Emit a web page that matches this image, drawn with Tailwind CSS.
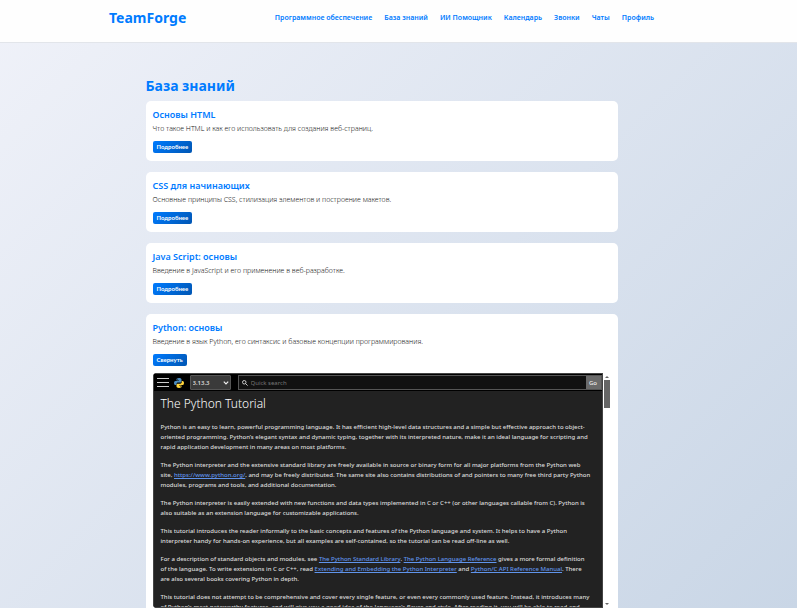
<!DOCTYPE html>
<html lang="ru">
<head>
<meta charset="utf-8">
<meta name="viewport" content="width=device-width, initial-scale=1">
<title>TeamForge — База знаний</title>
<script src="https://cdn.jsdelivr.net/npm/@tailwindcss/browser@4"></script>
</head>
<body class="h-screen overflow-hidden bg-linear-135 from-[#f0f2f9] to-[#c9d6e6] font-['Noto_Sans','Open_Sans',sans-serif] text-[#222]">
<header class="border-b border-[#e2e5ea] bg-[#fefefe] pr-[34px]">
  <div class="mx-auto flex h-[42px] max-w-[545px] items-center justify-between pb-1.5">
    <a href="#" class="text-[14px] leading-5 font-bold text-[#007bff]">TeamForge</a>
    <nav class="flex gap-3 text-[7px] leading-3 font-semibold whitespace-nowrap text-[#007bff]">
      <a href="#">Программное обеспечение</a>
      <a href="#">База знаний</a>
      <a href="#">ИИ Помощник</a>
      <a href="#">Календарь</a>
      <a href="#">Звонки</a>
      <a href="#">Чаты</a>
      <a href="#">Профиль</a>
    </nav>
  </div>
</header>
<main class="pt-[33px] pr-[34px]">
  <div class="mx-auto max-w-[472px]">
    <h1 class="mb-[5px] text-[14px] leading-5 font-bold text-[#007bff]">База знаний</h1>
    <div class="flex flex-col gap-[11px]">
      <article class="rounded-[5px] bg-white px-[7px] py-2">
        <h2 class="text-[9px] leading-3 font-semibold text-[#007bff]">Основы HTML</h2>
        <p class="mt-0.5 text-[7px] leading-3 font-light">Что такое HTML и как его использовать для создания веб-страниц.</p>
        <button class="mt-1.5 block h-3 rounded-xs bg-linear-135 from-[#007bff] to-[#0056b3] px-1 font-['Lato',sans-serif] text-[6px] leading-3 font-bold text-white">Подробнее</button>
      </article>
      <article class="rounded-[5px] bg-white px-[7px] py-2">
        <h2 class="text-[9px] leading-3 font-semibold text-[#007bff]">CSS для начинающих</h2>
        <p class="mt-0.5 text-[7px] leading-3 font-light">Основные принципы CSS, стилизация элементов и построение макетов.</p>
        <button class="mt-1.5 block h-3 rounded-xs bg-linear-135 from-[#007bff] to-[#0056b3] px-1 font-['Lato',sans-serif] text-[6px] leading-3 font-bold text-white">Подробнее</button>
      </article>
      <article class="rounded-[5px] bg-white px-[7px] py-2">
        <h2 class="text-[9px] leading-3 font-semibold text-[#007bff]">Java Script: основы</h2>
        <p class="mt-0.5 text-[7px] leading-3 font-light">Введение в JavaScript и его применение в веб-разработке.</p>
        <button class="mt-1.5 block h-3 rounded-xs bg-linear-135 from-[#007bff] to-[#0056b3] px-1 font-['Lato',sans-serif] text-[6px] leading-3 font-bold text-white">Подробнее</button>
      </article>
      <article class="rounded-[5px] bg-white px-[7px] py-2">
        <h2 class="text-[9px] leading-3 font-semibold text-[#007bff]">Python: основы</h2>
        <p class="mt-0.5 text-[7px] leading-3 font-light">Введение в язык Python, его синтаксис и базовые концепции программирования.</p>
        <button class="mt-1.5 block h-3 rounded-xs bg-linear-135 from-[#007bff] to-[#0056b3] px-1 font-['Lato',sans-serif] text-[6px] leading-3 font-bold text-white">Свернуть</button>
        <div class="mt-[7px] flex h-[235px] overflow-hidden rounded-[4px]">
          <section class="min-w-0 grow overflow-hidden border border-[#444] bg-[#222] text-[#ddd]">
            <div class="flex h-[17px] items-center bg-black pl-[3px]">
              <button aria-label="Меню" class="block text-[#ccc]"><svg class="h-[9px] w-3" viewBox="0 0 12 9" stroke="currentColor" stroke-width="1"><path d="M0 .5h12M0 4.5h12M0 8.5h12"/></svg></button>
              <svg class="ml-[5px] size-[10px]" viewBox="0 0 24 24" role="img" aria-label="Python">
                <path fill="#4b8bbe" fill-rule="evenodd" d="M11.9 0C6.600 0 6 2 6 3.500V6h6v1H3.500C1.500 7 0 9 0 12s1.500 5 3.500 5H6v-3c0-2 1.500-3.500 3.500-3.500h5.500c1.700 0 3-1.300 3-3v-4C18 1.500 16 0 11.900 0ZM8.700 2a1.100 1.100 0 1 1 0 2.200 1.100 1.100 0 0 1 0-2.200Z"/>
                <path fill="#ffd43b" fill-rule="evenodd" d="M12.100 24c5.300 0 5.900-2 5.900-3.500V18h-6v-1h8.500c2 0 3.500-2 3.500-5s-1.500-5-3.500-5H18.500v3c0 2-1.500 3.500-3.500 3.500H9.500c-1.700 0-3.500 1.300-3.500 3v4C6 22.500 8 24 12.100 24Zm3.200-2a1.100 1.100 0 1 1 0-2.200 1.100 1.100 0 0 1 0 2.200Z"/>
              </svg>
              <div class="relative ml-[6px] w-[41px] shrink-0">
                <select aria-label="Версия" class="block h-[15px] w-full appearance-none rounded-[1px] border border-[#555] bg-[#3a3a3a] pl-0.5 text-[6px] leading-3 font-semibold text-[#ddd]"><option>3.13.3</option></select>
                <svg class="pointer-events-none absolute top-[6px] right-0.5 h-1 w-1.5" viewBox="0 0 6 4" fill="none" stroke="#eee" stroke-width="1.200"><path d="m.8.7 2.200 2.300L5.200.7"/></svg>
              </div>
              <form class="ml-[7px] flex h-[15px] min-w-0 grow border border-[#555] bg-[#111]">
                <label for="search" class="flex items-center pl-[3px]"><svg class="size-1.5" viewBox="0 0 12 12" fill="none" stroke="#ddd" stroke-width="1.800" role="img" aria-label="Поиск"><circle cx="4.500" cy="4.500" r="3.500"/><path d="m7 7 4.200 4.200"/></svg></label>
                <input id="search" type="text" placeholder="Quick search" class="min-w-0 grow pl-[3px] text-[6px] leading-3 placeholder:text-[#777]">
                <button type="button" class="w-[15px] bg-[#6a6a6a] text-[6px] leading-3 font-medium text-[#eee]">Go</button>
              </form>
            </div>
            <div class="px-[7px] pt-[5px] text-[6px] leading-[10px] font-medium whitespace-nowrap">
              <h3 class="mb-[10px] text-[12px] leading-4 font-light text-white">The Python Tutorial</h3>
              <div class="flex flex-col gap-2">
                <p>Python is an easy to learn, powerful programming language. It has efficient high-level data structures and a simple but effective approach to object-<br>oriented programming. Python’s elegant syntax and dynamic typing, together with its interpreted nature, make it an ideal language for scripting and<br>rapid application development in many areas on most platforms.</p>
                <p>The Python interpreter and the extensive standard library are freely available in source or binary form for all major platforms from the Python web<br>site, <a href="#" class="text-[#6094eb] underline">https://www.python.org/</a>, and may be freely distributed. The same site also contains distributions of and pointers to many free third party Python<br>modules, programs and tools, and additional documentation.</p>
                <p>The Python interpreter is easily extended with new functions and data types implemented in C or C++ (or other languages callable from C). Python is<br>also suitable as an extension language for customizable applications.</p>
                <p>This tutorial introduces the reader informally to the basic concepts and features of the Python language and system. It helps to have a Python<br>interpreter handy for hands-on experience, but all examples are self-contained, so the tutorial can be read off-line as well.</p>
                <p>For a description of standard objects and modules, see <a href="#" class="text-[#6094eb] underline">The Python Standard Library</a>. <a href="#" class="text-[#6094eb] underline">The Python Language Reference</a> gives a more formal definition<br>of the language. To write extensions in C or C++, read <a href="#" class="text-[#6094eb] underline">Extending and Embedding the Python Interpreter</a> and <a href="#" class="text-[#6094eb] underline">Python/C API Reference Manual</a>. There<br>are also several books covering Python in depth.</p>
                <p>This tutorial does not attempt to be comprehensive and cover every single feature, or even every commonly used feature. Instead, it introduces many<br>of Python’s most noteworthy features, and will give you a good idea of the language’s flavor and style. After reading it, you will be able to read and</p>
              </div>
            </div>
          </section>
          <div class="flex w-2 shrink-0 flex-col items-center justify-between bg-white py-[3px]">
            <div class="flex flex-col items-center gap-0.5">
              <svg class="h-0.5 w-1" viewBox="0 0 4 2" fill="#666"><path d="M2 0 4 2H0z"/></svg>
              <div class="h-7 w-1.5 bg-[#666]"></div>
            </div>
            <svg class="h-0.5 w-1" viewBox="0 0 4 2" fill="#666"><path d="M0 0h4L2 2z"/></svg>
          </div>
        </div>
      </article>
    </div>
  </div>
</main>
</body>
</html>
